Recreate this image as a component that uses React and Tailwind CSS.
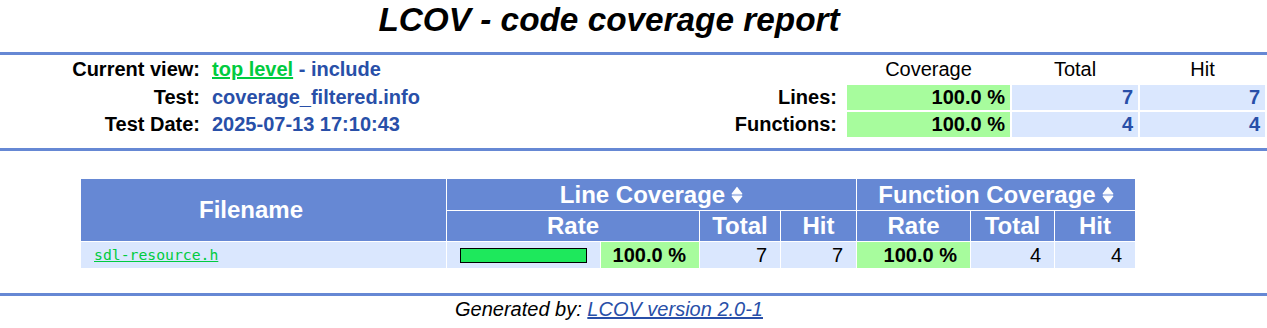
import React from "react";

const SortIcon = () => (
  <svg width="12" height="18" viewBox="0 0 12 18" className="ml-[6px] shrink-0">
    <path d="M6 1.5 L10.8 7.8 L1.2 7.8 Z" fill="white" stroke="white" strokeWidth="1.2" strokeLinejoin="round" />
    <path d="M1.2 10.2 L10.8 10.2 L6 16.5 Z" fill="white" stroke="white" strokeWidth="1.2" strokeLinejoin="round" />
  </svg>
);

const Ruler = () => <div className="h-[3px] w-full bg-[#6688d4]" />;

export default function App() {
  const label = "flex items-center justify-end pr-[8px] font-bold text-black whitespace-nowrap";
  const value = "flex items-center pl-[2px] font-bold text-[#284fa8] whitespace-nowrap";
  const head = "flex items-center justify-center text-black whitespace-nowrap";
  const hi = "flex items-center justify-end pr-[5px] bg-[#a7fc9d] font-bold text-black";
  const num = "flex items-center justify-end pr-[5px] bg-[#dae7fe] font-bold text-[#284fa8]";
  const th = "flex items-center justify-center bg-[#6688d4] text-white font-bold text-[24px] leading-[28px] whitespace-nowrap";
  const td = "flex items-center justify-end pr-[13px] bg-[#dae7fe] text-black";

  return (
    <div className="w-[1267px] h-[328px] bg-white text-[20px] leading-[23px] text-black font-['Liberation_Sans',Arial,sans-serif] overflow-hidden">
      <div className="h-[52px] pt-[1px] w-[1218px] text-center text-[33.33px] leading-[38px] font-bold italic">
        LCOV - code coverage report
      </div>
      <Ruler />
      <div className="grid grid-cols-[208px_1fr_auto_163px_126px_125px] grid-rows-[27px_25px_25px] gap-x-[2px] gap-y-[2px] pt-[1px] pb-[11px] pr-[2px]">
        <div className={label}>Current view:</div>
        <div className={value}>
          <a href="#" className="text-[#00cb40] underline">top level</a>
          <span>&nbsp;- include</span>
        </div>
        <div />
        <div className={head}>Coverage</div>
        <div className={head}>Total</div>
        <div className={head}>Hit</div>

        <div className={label}>Test:</div>
        <div className={value}>coverage_filtered.info</div>
        <div className={label}>Lines:</div>
        <div className={hi}>100.0 %</div>
        <div className={num}>7</div>
        <div className={num}>7</div>

        <div className={label}>Test Date:</div>
        <div className={value}>2025-07-13 17:10:43</div>
        <div className={label}>Functions:</div>
        <div className={hi}>100.0 %</div>
        <div className={num}>4</div>
        <div className={num}>4</div>
      </div>
      <Ruler />

      <div className="mt-[28px] ml-[81px] w-fit grid grid-cols-[365px_153px_98px_80px_75px_113px_83px_80px] grid-rows-[31px_30px_26px] gap-[1px]">
        <div className={`${th} row-span-2 pr-[25px]`}>Filename</div>
        <div className={`${th} col-span-4`}>
          <span>Line Coverage</span>
          <SortIcon />
        </div>
        <div className={`${th} col-span-3`}>
          <span>Function Coverage</span>
          <SortIcon />
        </div>

        <div className={`${th} col-span-2`}>Rate</div>
        <div className={th}>Total</div>
        <div className={th}>Hit</div>
        <div className={th}>Rate</div>
        <div className={th}>Total</div>
        <div className={th}>Hit</div>

        <div className="flex items-center pl-[13px] bg-[#dae7fe]">
          <a href="#" className="text-[#00cb40] underline font-['DejaVu_Sans_Mono',monospace] text-[14.75px] leading-[18px]">
            sdl-resource.h
          </a>
        </div>
        <div className="flex items-center pl-[13px] bg-[#dae7fe]">
          <div className="w-[127px] h-[15px] border border-black bg-[#1ee85c]" />
        </div>
        <div className="flex items-center justify-end pr-[13px] bg-[#a7fc9d] font-bold">100.0 %</div>
        <div className={td}>7</div>
        <div className={td}>7</div>
        <div className="flex items-center justify-end pr-[13px] bg-[#a7fc9d] font-bold">100.0 %</div>
        <div className={td}>4</div>
        <div className={td}>4</div>
      </div>

      <div className="mt-[25px]">
        <Ruler />
      </div>
      <div className="pt-[2px] w-[1218px] text-center italic">
        Generated by:{" "}
        <a href="#" className="text-[#284fa8] underline">LCOV version 2.0-1</a>
      </div>
    </div>
  );
}
